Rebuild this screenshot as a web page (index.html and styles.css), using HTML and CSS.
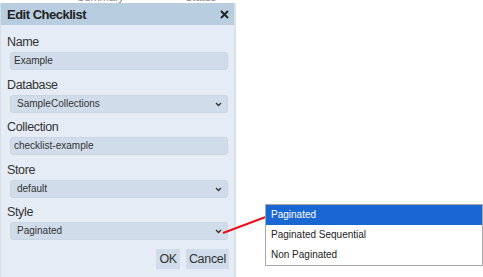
FILE: index.html
```html
<!DOCTYPE html>
<html>
<head>
<meta charset="utf-8">
<link rel="stylesheet" href="styles.css">
</head>
<body>
<div class="page">
  <span class="bgtext bg1">Summary</span>
  <span class="bgtext bg2">Status</span>
  <div class="dialog">
    <div class="header">
      <span class="title">Edit Checklist</span>
      <svg class="close" width="9" height="9" viewBox="0 0 9 9"><path d="M1 1L8 8M8 1L1 8" stroke="#222" stroke-width="1.9"/></svg>
    </div>
    <div class="body">
      <div class="label">Name</div>
      <div class="field">Example</div>
      <div class="label">Database</div>
      <div class="field select">SampleCollections<svg class="chev" width="7" height="5" viewBox="0 0 7 5"><path d="M1 1l2.5 2.5L6 1" fill="none" stroke="#333" stroke-width="1.3"/></svg></div>
      <div class="label">Collection</div>
      <div class="field">checklist-example</div>
      <div class="label">Store</div>
      <div class="field select">default<svg class="chev" width="7" height="5" viewBox="0 0 7 5"><path d="M1 1l2.5 2.5L6 1" fill="none" stroke="#333" stroke-width="1.3"/></svg></div>
      <div class="label">Style</div>
      <div class="field select">Paginated<svg class="chev" width="7" height="5" viewBox="0 0 7 5"><path d="M1 1l2.5 2.5L6 1" fill="none" stroke="#333" stroke-width="1.3"/></svg></div>
      <div class="buttons">
        <span class="btn">OK</span>
        <span class="btn">Cancel</span>
      </div>
    </div>
  </div>
  <svg class="arrow" width="483" height="277" viewBox="0 0 483 277"><line x1="223" y1="233" x2="267" y2="216.5" stroke="#e8101a" stroke-width="2"/></svg>
  <div class="menu">
    <div class="opt sel">Paginated</div>
    <div class="opt">Paginated Sequential</div>
    <div class="opt">Non Paginated</div>
  </div>
</div>
</body>
</html>
```
FILE: styles.css
```css
html, body { margin: 0; padding: 0; background: #fff; }
body { font-family: "Liberation Sans", Arial, sans-serif; }
.page { position: relative; width: 483px; height: 277px; overflow: hidden; }
.bgtext { position: absolute; top: -9px; font-size: 11px; color: #8a8a8a; }
.bg1 { left: 77px; }
.bg2 { left: 185px; }
.dialog { position: relative; width: 236px; height: 274px; margin-top: 3px; background: #e5ecf5; border-left: 1px solid #d6dfe9; border-right: 2px solid #d8e1ec; box-sizing: border-box; }
.header { height: 22px; background: #b9cde0; display: flex; align-items: center; justify-content: space-between; padding: 0 5px 0 6px; }
.title { font-weight: bold; font-size: 13px; letter-spacing: -0.5px; color: #222; }
.close { display: block; }
.body { padding: 9px 6px 0 6px; }
.label { font-size: 12.5px; letter-spacing: -0.35px; color: #333; line-height: 16px; }
.field { margin: 2px 0 6.5px 3px; height: 18px; box-sizing: border-box; background: #d0dce9; border: 1px solid #c8d5e3; border-radius: 3px; font-size: 10px; color: #333; line-height: 16px; padding: 0 3px; position: relative; }
.field.select { padding-left: 6px; }
.chev { position: absolute; right: 5px; top: 6px; }
.buttons { display: flex; justify-content: flex-end; gap: 6px; margin-top: 9px; margin-right: -1px; }
.btn { background: #d0dce9; font-size: 12.5px; letter-spacing: -0.3px; color: #333; padding: 0 3px; height: 20px; line-height: 20px; }
.arrow { position: absolute; left: 0; top: 0; pointer-events: none; }
.menu { position: absolute; left: 265px; top: 204px; width: 218px; box-sizing: border-box; background: #fff; border: 1px solid #a8a8a8; font-size: 10px; color: #222; }
.opt { height: 20px; line-height: 20px; padding-left: 5px; }
.opt.sel { background: #1967d2; color: #fff; }
```
